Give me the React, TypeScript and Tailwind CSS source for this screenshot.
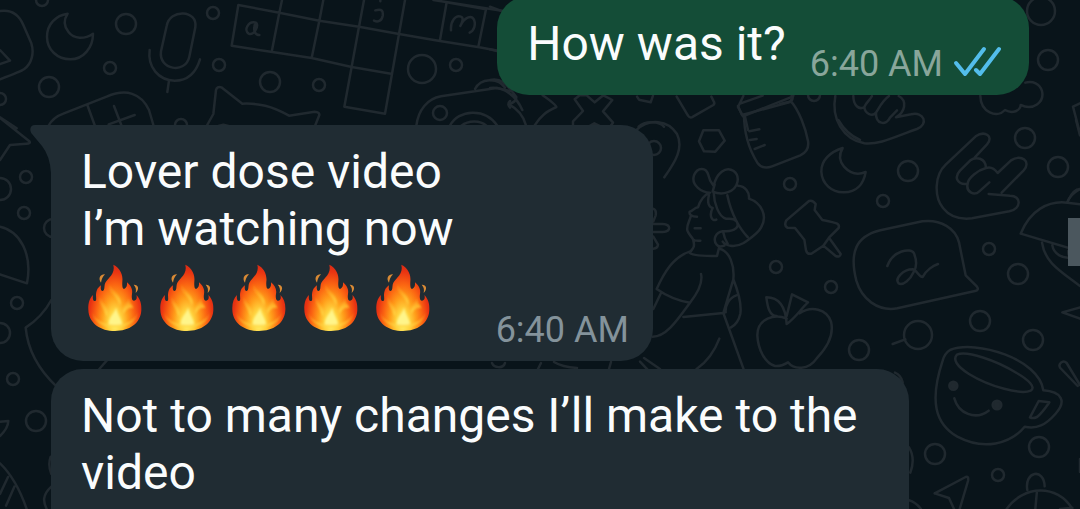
import { useId } from "react";
import type { ReactNode } from "react";

type Ring = [number, number, number];

const rings: Ring[] = [
  [42, 0, 6], [126, 24, 10], [110, 68, 6], [49, 87, 10], [0, 99, 6], [213, 13, 6], [219, 65, 6],
  [270, 82, 10], [319, 85, 6], [422, 69, 14], [456, 65, 6], [440, 113, 7], [181, 125, 6],
  [1041, 11, 14], [1048, 60, 10], [1025, 138, 10], [1058, 167, 10], [908, 171, 10], [790, 184, 6],
  [776, 267, 6], [831, 287, 6], [859, 350, 10], [989, 249, 6], [1018, 274, 10], [918, 335, 14],
  [980, 321, 10], [1033, 340, 10], [935, 454, 10], [1039, 447, 10], [998, 475, 6], [26, 177, 6],
  [24, 213, 6], [17, 303, 6], [0, 189, 11], [0, 333, 10], [13, 379, 6], [36, 421, 10],
  [53, 228, 9], [814, 95, 6], [654, 148, 7], [883, 201, 6],
];

function Sketch({ at, children }: { at: string; children: ReactNode }) {
  return <g transform={`translate(${at}) scale(0.33333)`}>{children}</g>;
}

function Wallpaper() {
  return (
    <svg
      aria-hidden="true"
      className="pointer-events-none absolute top-0 left-0"
      width="1080"
      height="509"
      viewBox="0 0 1080 509"
      fill="none"
      stroke="#20292f"
      strokeWidth="7.5"
      strokeLinecap="round"
      strokeLinejoin="round"
    >
      <g strokeWidth="2.5">
        {rings.map(([cx, cy, r]) => (
          <circle key={`${cx}-${cy}`} cx={cx} cy={cy} r={r} />
        ))}
      </g>

      <Sketch at="0 0">
        <path d="M0 33C34 28 57 44 70 75L94 130C103 158 96 190 72 208Q64 214 0 238M0 150L30 182L0 192" />
        <path d="M203 41C168 46 141 72 141 110C141 150 173 178 211 178C251 178 279 142 279 101C252 119 222 117 206 97C192 80 191 59 203 41Z" />
        <path d="M500 78C509 25 594 29 586 82L568 170C556 224 475 209 483 154ZM449 150C442 201 476 241 524 242C563 242 588 218 600 178M507 242L502 276" />
        <path d="M145 378C155 360 167 349 190 341L320 290C378 265 423 279 447 330L461 378M262 315L285 378M342 318L365 378M326 373L404 345M0 352L50 385" />
        <path d="M620 378L640 342L648 270Q651 258 664 262L727 311C776 309 815 318 867 347L944 335Q959 336 958 345L945 378M655 378L670 374L700 382" />
      </Sketch>

      <Sketch at="220 0">
        <path d="M55 15L178 38L298 62L417 80L537 102L655 122L778 142L850 155M178 38L186 0M298 62L310 0M417 80L432 0M537 102L555 0M55 15L35 137L157 156L275 174L395 201L513 221M178 38L155 156M298 62L275 174M417 80L373 320L495 341L537 102M660 120L680 7L798 28L775 140M640 0L850 33" />
        <path d="M108 68C85 61 70 91 86 101C102 108 120 72 107 68C99 84 102 105 118 105M466 31C487 25 490 34 488 48C485 64 473 67 462 62M693 91C691 63 707 44 723 50C733 53 725 70 721 78C733 52 754 43 762 59C768 74 762 92 749 98" />
        <path d="M481 1V4M589 377C595 330 622 296 663 289L830 264L870 273M765 267C781 235 833 230 855 263M690 377C715 328 795 322 832 377M724 377C745 360 781 360 799 377M870 303Q860 313 870 323" />
      </Sketch>

      <Sketch at="490 0">
        <path d="M0 20L40 35M0 148L24 154M0 240C41 231 57 265 79 291M0 264C45 259 79 290 97 330M78 291Q82 303 57 313Q97 334 108 376M134 376C153 346 169 335 199 321Q198 314 158 286" />
        <path d="M254 298L269 286H290L314 307L340 286L367 300L339 334L369 368L360 380M254 298L279 333L249 364V380M296 380L313 370L333 380M441 290L447 299L482 307L489 287M560 290L594 347Q600 356 609 350L670 315Q676 310 670 302L664 290" />
        <path d="M446 380C466 360 510 364 522 380M744 321L760 288M744 321L759 349L902 292M750 311L818 287M765 350L774 390" />
      </Sketch>

      <Sketch at="500 80">
        <path d="M408 151C448 113 505 120 531 162C551 203 528 243 493 292M610 151H657L674 182L646 215L612 214L597 184ZM732 103C732 160 750 213 772 248Q788 270 816 259L901 226Q929 213 924 183C917 145 897 91 873 64M748 154L778 148M750 180L770 177M764 207L794 195M714 78L726 105L870 66L880 47" />
      </Sketch>

      <Sketch at="780 0">
        <path d="M166 288C153 356 189 417 253 430C300 435 349 408 411 387C447 373 432 333 393 343L348 352C375 337 383 302 356 288M220 288C220 316 237 331 253 321C255 343 278 350 288 338C287 373 318 378 330 353L351 331M253 321C259 306 270 300 276 288M288 338C298 322 307 302 327 288" />
        <path d="M188 444C150 456 123 481 124 515C126 552 155 577 190 577C230 578 251 551 257 516C233 526 210 520 192 500C177 482 178 461 188 444Z" />
        <path d="M601 287C602 337 651 356 675 330C698 343 721 332 722 315C759 333 794 307 786 273C780 251 758 242 736 248M900 310L879 320L900 400M865 600Q880 568 900 567" />
        <path d="M35 286C42 298 34 306 22 307L0 312" />
      </Sketch>

      <Sketch at="640 120">
        <path d="M149 275C158 272 164 263 174 262C180 243 190 226 210 218C187 218 152 197 162 166C173 139 199 142 205 165Q208 182 221 198C229 160 257 137 281 153C301 168 297 207 262 217C248 222 233 221 218 215L224 193M294 197C316 198 329 218 327 236C365 249 384 288 363 323C354 341 331 355 311 369C283 385 256 377 248 365M221 217C222 249 236 291 258 296C271 297 280 293 290 304C303 330 270 334 248 334C226 337 218 359 230 374Q235 383 253 377M262 226C274 285 301 329 323 351M207 225C201 248 206 261 218 264C207 284 214 306 229 299M149 275C147 283 154 290 171 290M152 290C147 307 137 321 143 334C147 344 156 351 159 358Q166 364 181 362M164 325H182M160 362C166 384 157 386 149 398Q157 408 231 408L238 380M249 334Q253 356 263 371" />
        <path d="M149 395C99 411 72 459 50 507Q97 540 150 548M64 517L40 567M150 548Q191 496 183 462M150 548C116 594 81 650 38 650M238 386C269 393 284 436 280 478L250 579L130 591M250 579L311 748M280 478C293 511 306 548 301 581C296 604 288 614 273 622M289 526C267 534 255 557 257 577M238 656Q216 715 169 748" />
        <path d="M39 266Q50 269 47 286L40 304M40 312H68C94 314 94 334 68 336H40M40 350L54 374Q53 385 40 386M595 0Q620 43 660 60" />
        <path d="M439 301L507 243Q518 239 527 252L524 270L547 300Q562 302 590 310Q599 314 596 324L567 353L602 402Q600 413 587 408L550 377L514 401Q501 404 498 391L493 359L465 324L442 323Q431 316 439 301ZM550 377L567 353" />
        <path d="M440 612C437 564 421 532 379 532C383 563 389 588 410 588M440 612C470 590 481 568 504 547L456 523L440 588M440 596C405 580 352 595 352 646C354 689 376 731 405 738C422 740 434 733 444 727C462 750 506 751 530 715C565 679 582 641 573 605C560 567 514 556 479 580" />
        <path d="M0 725L22 748" />
      </Sketch>

      <Sketch at="840 190">
        <path d="M121 121L247 94C303 87 347 116 357 157L377 256L411 290Q418 300 405 303L172 355C113 365 65 327 49 272C28 189 46 139 121 121Z" />
        <path d="M142 228C158 181 214 172 222 190C231 213 232 229 221 246C211 269 189 287 176 280C163 266 189 238 218 238C231 239 235 260 248 261C257 241 280 227 294 222M158 462L196 448" />
      </Sketch>

      <Sketch at="900 120">
        <path d="M224 113L261 73C283 48 254 31 227 49L137 134C103 166 102 230 129 264C149 290 180 299 216 295L328 274C365 266 365 227 330 227L266 222M305 218L371 151C395 125 364 101 333 121L293 159C283 145 269 140 258 144C257 113 227 109 211 121L180 152C160 173 174 196 203 191C197 215 222 229 238 214L268 187M203 191C204 174 234 150 258 144" />
        <path d="M362 341C390 272 444 241 502 248L540 253M362 341L540 394M502 246Q512 222 540 207M426 368C435 427 478 451 540 498M457 376C461 401 487 417 514 412M505 392C504 418 520 431 540 430M540 562L487 577L540 596M528 0L540 46" />
      </Sketch>

      <Sketch at="880 330">
        <path d="M210 60C288 28 477 87 490 181C544 185 562 213 526 252C497 285 471 298 434 290C392 342 311 362 232 320C165 281 148 213 188 92Q194 70 210 60ZM231 74C260 61 349 91 410 129C446 150 469 172 452 182C424 195 330 171 267 132C231 109 217 88 231 74ZM476 213L450 262Q458 267 471 261C488 247 499 230 508 217ZM223 205C235 250 286 272 326 242" />
        <circle cx="220" cy="167" r="12" fill="#20292f" />
        <circle cx="351" cy="225" r="13" fill="#20292f" />
        <path d="M600 165L560 99C548 87 533 103 541 114L593 168M164 490L257 441Q267 438 264 453L239 537M164 490L207 504L222 537M442 480C432 424 492 412 494 469M380 537C430 465 532 461 577 537M471 482L466 537M87 352Q107 385 91 428M87 511Q106 516 123 537M600 387V426M540 537L577 533M45 128Q63 135 68 157" />
      </Sketch>

      <Sketch at="0 110">
        <path d="M0 24L88 94Q93 101 79 101L30 105L0 150M0 350C60 363 98 432 81 520L0 493M154 570Q127 620 77 653Q86 751 170 830M298 777L320 752M25 933Q24 955 0 978M25 933L0 935M0 1060Q49 1107 80 1197M0 1152L24 1101M18 1187L43 1130M154 1130C124 1157 131 1178 140 1197M152 1040Q143 1065 154 1092" />
      </Sketch>

      <path
        strokeWidth="2.5"
        d="M492 363C494 368 503 369 505 363M541 363L538 369M554 362Q562 367 577 368M611 362L609 369M644 358L660 369"
      />
    </svg>
  );
}

function Flame() {
  const id = useId();
  const body = `${id}body`;
  const lick = `${id}lick`;
  const soft = `${id}soft`;
  return (
    <svg role="img" aria-label="Fire" className="size-[72px]" viewBox="20 18 216 216">
      <defs>
        <radialGradient id={body} gradientUnits="userSpaceOnUse" cx="122" cy="206" r="172" gradientTransform="translate(122 206) scale(0.5 1) translate(-122 -206)">
          <stop offset="0" stopColor="#fff06a" />
          <stop offset="0.25" stopColor="#ffd03c" />
          <stop offset="0.46" stopColor="#ff9d1a" />
          <stop offset="0.68" stopColor="#fb6612" />
          <stop offset="0.9" stopColor="#ea3512" />
          <stop offset="1" stopColor="#dc2c14" />
        </radialGradient>
        <linearGradient id={lick} x1="0" y1="0" x2="0" y2="1">
          <stop offset="0" stopColor="#ff7a16" stopOpacity="0.3" />
          <stop offset="0.5" stopColor="#ffae25" />
          <stop offset="1" stopColor="#ffe550" />
        </linearGradient>
        <filter id={soft} x="-20%" y="-20%" width="140%" height="140%">
          <feGaussianBlur stdDeviation="3" />
        </filter>
      </defs>
      <path
        fill={`url(#${body})`}
        d="M117 29C137 38 147 60 144 80C143 94 145 104 151 101C157 98 159 91 158 82C169 91 176 103 173 117C171 130 174 138 179 137C187 136 189 129 186 120C198 132 202 147 201 166C199 206 164 228 122 228C78 228 43 204 42 164C41 144 46 130 56 120C54 132 57 140 63 138C69 135 62 121 67 107C70 99 75 95 80 91C78 101 80 109 85 108C93 104 88 94 93 83C101 68 124 57 117 29Z"
      />
      <g filter={`url(#${soft})`} fill={`url(#${lick})`}>
        <path d="M105 84C98 113 130 123 137 151C142 133 131 121 123 112C114 103 107 94 105 84Z" />
        <path d="M77 119C70 146 90 157 97 184C108 163 92 151 86 142C80 134 77 127 77 119Z" />
        <path d="M163 121C164 143 143 149 146 177C154 160 171 155 177 160C174 151 168 149 166 139Z" />
        <path fill="#fff58a" d="M126 157C119 179 106 182 103 207C115 223 136 219 143 205C140 190 128 178 126 157Z" />
        <path d="M53 170C57 194 75 212 122 218C170 212 187 194 191 170C180 196 160 208 122 210C84 208 63 196 53 170Z" />
      </g>
      <path fill="#d98a35" d="M92 58C79 57 70 70 80 83C82 72 84 67 92 58ZM178 89C191 88 197 101 184 114C186 103 185 97 178 89Z" />
    </svg>
  );
}

function ReadTicks() {
  return (
    <svg role="img" aria-label="Read" className="h-9 w-12" viewBox="0 0 48 36" fill="none" stroke="#53bdeb" strokeWidth="4" strokeLinecap="round" strokeLinejoin="round">
      <path d="M3 19L12 30L31 5" />
      <path d="M23 26L27 30L46 5" />
    </svg>
  );
}

export default function App() {
  return (
    <main className="relative flex min-h-screen flex-col overflow-hidden bg-[#09141a] pl-[51px] font-[Roboto,sans-serif] text-[48px] leading-[57px] text-[#fafcfd]">
      <Wallpaper />

      <article className="relative -mt-1 mr-[51px] flex items-end self-end rounded-[32px] bg-[#144d37] pr-7 pb-[11px] pl-[30px]">
        <p className="pt-[19px] pb-3">How was it?</p>
        <time className="ml-6 text-[36px] leading-10 text-[#89a69b]">6:40 AM</time>
        <span className="mb-1 ml-[10px]">
          <ReadTicks />
        </span>
      </article>

      <article className="relative mt-[30px] flex items-end gap-[42px] self-start rounded-[32px] rounded-tl-none bg-[#202c33] pr-6 pb-[11px] pl-[30px]">
        <svg aria-hidden="true" className="absolute top-0 -left-[21px]" width="22" height="48" viewBox="0 0 22 48">
          <path d="M22 0H5C0 0-1 5 2 9L12 21Q20 31 21 48H22Z" fill="#202c33" />
        </svg>
        <div className="pt-[18px] pb-[17px]">
          <p>Lover dose video</p>
          <p>I’m watching now</p>
          <p className="mt-1 flex">
            <Flame />
            <Flame />
            <Flame />
            <Flame />
            <Flame />
          </p>
        </div>
        <time className="text-[36px] leading-10 text-[#84939b]">6:40 AM</time>
      </article>

      <article className="relative mt-2 w-full max-w-[858px] grow rounded-t-[32px] bg-[#202c33] pt-[18px] pr-6 pl-[30px]">
        <p>Not to many changes I’ll make to the video</p>
      </article>

      <div aria-hidden="true" className="absolute top-[218px] right-0 h-12 w-3 bg-[#4b575e]" />
    </main>
  );
}
